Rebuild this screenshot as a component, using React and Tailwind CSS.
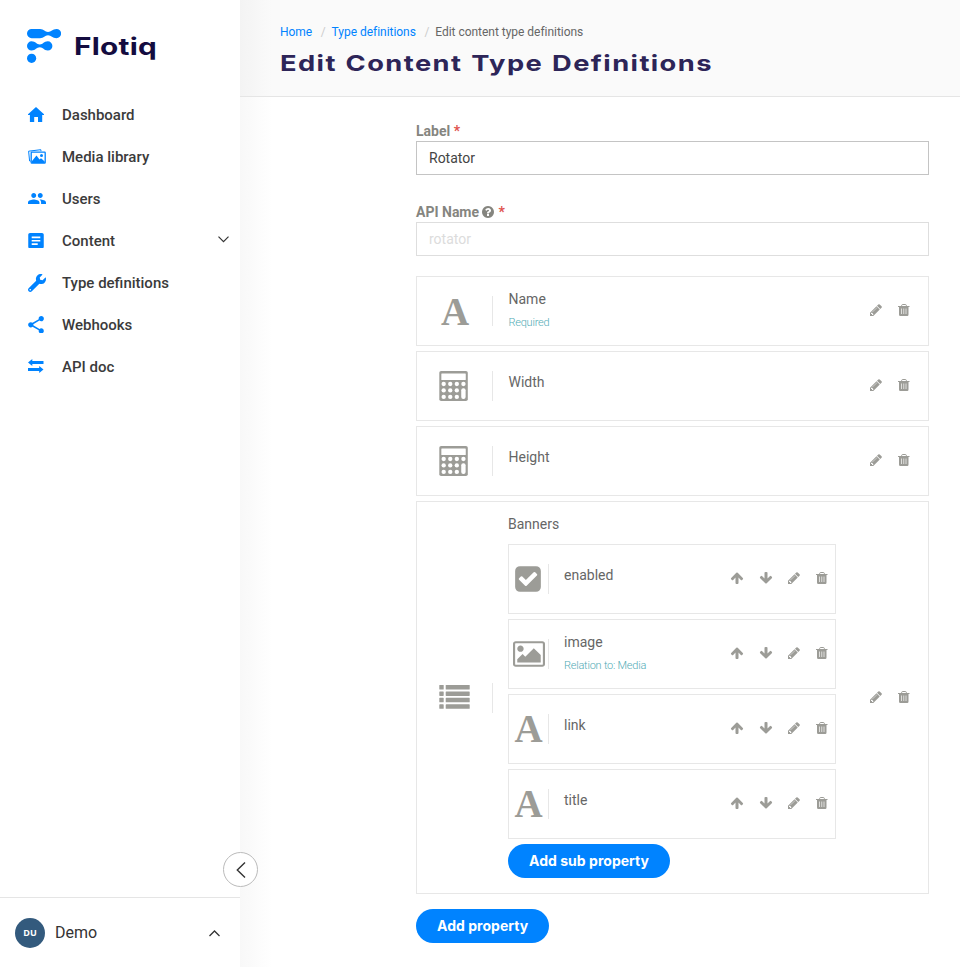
import { MdPeople, MdArticle, MdShare } from "react-icons/md";
import { FaWrench } from "react-icons/fa";

function Logo() {
  return (
    <div className="flex h-[34px] items-center">
      <svg width="34" height="34" viewBox="0 0 34 34" fill="#0083ff">
        <path d="M4.600 0H13C17 0 17.800 3 21 3S25.500 0 29.500 0a4.600 4.600 0 0 1 0 9.200C25.500 9.200 24.200 6.200 21 6.200S17 9.200 13 9.200H4.600A4.600 4.600 0 0 1 4.600 0Z" />
        <path d="M4.600 12.300c4 0 4.900 3.200 8.200 3.200s4-3.200 8-3.200a4.600 4.600 0 0 1 0 9.200c-4 0-4.700-3.200-8-3.200s-4.200 3.200-8.200 3.200a4.600 4.600 0 0 1 0-9.200Z" />
        <circle cx="4.600" cy="29.300" r="4.600" />
      </svg>
      <span className="mt-[1px] ml-[13px] inline-block origin-left scale-x-[1.24] font-[Inter] text-[24px] leading-none font-bold tracking-[0.2px] text-[#140c40]">Flotiq</span>
    </div>
  );
}

function HomeIcon() {
  return (
    <svg className="-mt-[1px]" width="16" height="15" viewBox="0 0 16 15" fill="currentColor">
      <path d="M8 0 16 7.300V8h-1.800v7H10v-5H6.200v5H1.900V8H0v-.700Z" />
    </svg>
  );
}

function MediaIcon() {
  return (
    <svg className="-mt-[1px]" width="18" height="15" viewBox="0 0 18 15" fill="none">
      <path d="M2.700 12.200 1.600 12 .6 2.200 12.800.7l.2 1.500" stroke="currentColor" strokeWidth="1" />
      <rect x="3.200" y="3.200" width="14" height="11" rx=".6" stroke="currentColor" strokeWidth="1.300" />
      <circle cx="13.500" cy="6.400" r="1.500" fill="currentColor" />
      <path d="M4 14v-2L8.500 6.500l3 4 1.500-1.300 3.700 3.300V14Z" fill="currentColor" />
    </svg>
  );
}

function ApiIcon() {
  return (
    <svg className="-mt-[2px]" width="16" height="14" viewBox="0 0 16 14" fill="currentColor">
      <path d="M0 3.500 4.300 0v2.100H15.500v2.800H4.300V7ZM15.500 10.500 11.200 7v2.100H0v2.800h11.200V14Z" />
    </svg>
  );
}

const NAV = [
  { label: "Dashboard", icon: <HomeIcon /> },
  { label: "Media library", icon: <MediaIcon /> },
  { label: "Users", icon: <MdPeople viewBox="1 5 22 14" className="-mt-[1px] h-[11.500px] w-[18px]" /> },
  { label: "Content", icon: <MdArticle viewBox="3 3 18 18" className="-mt-[1px] h-[15.500px] w-[16px]" />, expandable: true },
  { label: "Type definitions", icon: <FaWrench className="-mt-[1px] h-[18px] w-[18px]" /> },
  { label: "Webhooks", icon: <MdShare viewBox="3 2 18 20" className="-mt-[1px] h-[17.500px] w-[16px]" /> },
  { label: "API doc", icon: <ApiIcon /> },
];

function Sidebar() {
  return (
    <aside className="relative z-10 flex w-[240px] shrink-0 flex-col bg-white">
      <div className="pt-[29px] pl-[27px]">
        <Logo />
      </div>
      <nav className="mt-[31px] flex flex-col">
        {NAV.map((item) => (
          <a key={item.label} className="flex h-[42px] items-center pr-[11px] pl-[28px] text-[15px] font-medium text-[#3b3b3b]">
            <span className="flex w-[34px] text-[#0083ff]">{item.icon}</span>
            <span>{item.label}</span>
            {item.expandable && (
              <svg className="-mt-[4px] ml-auto" width="11" height="7" viewBox="0 0 11 7" fill="none" stroke="#333" strokeWidth="1.200">
                <path d="M.5.700 5.500 5.700l5-5" />
              </svg>
            )}
          </a>
        ))}
      </nav>
      <div className="mt-auto flex h-[70px] items-center border-t border-[#e5e5e5] pr-[20px] pl-[15px]">
        <span className="flex h-[30px] w-[30px] items-center justify-center rounded-full bg-[#335a7d] font-['Open_Sans'] text-[9px] font-bold text-white">DU</span>
        <span className="ml-[10px] text-[16px] text-[#333]">Demo</span>
        <svg className="mt-[2px] ml-auto" width="11" height="7" viewBox="0 0 11 7" fill="none" stroke="#333" strokeWidth="1.300">
          <path d="M.5 6 5.500 1l5 5" />
        </svg>
      </div>
      <button className="absolute top-[852px] left-[223px] flex h-[35px] w-[35px] items-center justify-center rounded-full border border-[#bbb] bg-white">
        <svg width="10" height="16" viewBox="0 0 10 16" fill="none" stroke="#333" strokeWidth="1.400">
          <path d="M9 .5 1.300 8 9 15.500" />
        </svg>
      </button>
    </aside>
  );
}

function PencilIcon() {
  return (
    <svg width="14" height="14" viewBox="0 0 1792 1792" fill="currentColor">
      <path d="M491 1536l91-91-235-235-91 91v107h128v128h107zm523-928q0-22-22-22-10 0-17 7l-542 542q-7 7-7 17 0 22 22 22 10 0 17-7l542-542q7-7 7-17zm-54-192l416 416-832 832h-416v-416zm683 96q0 53-37 90l-166 166-416-416 166-165q36-38 90-38 53 0 91 38l235 234q37 39 37 91z" />
    </svg>
  );
}

function TrashIcon() {
  return (
    <svg width="14" height="14" viewBox="0 0 14 14" fill="none">
      <path d="M4.700 3V2.200Q4.900 1.500 5.500 1.500h3q.6 0 .8.700V3" stroke="currentColor" />
      <path d="M1 3h11.500v1H11.500v7.500Q11.500 13 10.300 13H3.300Q2 13 2 11.500V4H1Z" fill="currentColor" />
      <path d="M4.500 5.500v5.500M6.750 5.500v5.500M9 5.500v5.500" stroke="#e6e6e4" strokeWidth=".9" />
    </svg>
  );
}

function ArrowIcon({ down }) {
  return (
    <svg className={down ? "rotate-180" : ""} width="14" height="14" viewBox="0 0 1792 1792" fill="currentColor">
      <path d="M1675 971q0 51-37 90l-75 75q-38 38-91 38-54 0-90-38l-294-293v704q0 52-37.500 84.500t-90.500 32.500h-128q-53 0-90.500-32.500t-37.500-84.500v-704l-294 293q-36 38-90 38t-90-38l-75-75q-38-38-38-90 0-53 38-91l651-651q35-37 90-37 54 0 91 37l651 651q37 39 37 91z" />
    </svg>
  );
}

function QuestionIcon() {
  return (
    <svg width="14" height="14" viewBox="0 0 1792 1792" fill="currentColor">
      <path d="M1024 1376v-192q0-14-9-23t-23-9h-192q-14 0-23 9t-9 23v192q0 14 9 23t23 9h192q14 0 23-9t9-23zm256-672q0-88-55.500-163t-138.500-116-170-41q-243 0-371 213-15 24 8 42l132 100q7 6 19 6 16 0 25-12 53-68 86-92 34-24 86-24 48 0 85.500 26t37.500 59q0 38-20 61t-68 45q-63 28-115.500 86.500t-52.500 125.500v36q0 14 9 23t23 9h192q14 0 23-9t9-23q0-19 21.500-49.500t54.500-49.500q32-18 49-28.500t46-35 44.500-48 28-60.500 12.500-81zm384 192q0 209-103 385.500t-279.500 279.500-385.500 103-385.500-103-279.500-279.500-103-385.500 103-385.500 279.500-279.500 385.500-103 385.500 103 279.500 279.500 103 385.500z" />
    </svg>
  );
}

function CalculatorIcon() {
  return (
    <svg width="29" height="30" viewBox="0 0 28.500 30" preserveAspectRatio="none">
      <rect x=".3" width="28" height="30" rx="1.800" fill="#9c9c97" />
      <g fill="#fff">
        <rect x="2.300" y="2.400" width="24" height="6.600" rx=".5" />
        {[13, 19.400, 25.900].map((y) => [4.600, 11.050, 17.500].map((x) => <circle key={`${x}-${y}`} cx={x} cy={y} r="2.150" />))}
        <circle cx="24" cy="13" r="2.150" />
        <rect x="21.850" y="17.300" width="4.300" height="10.700" rx="2" />
      </g>
    </svg>
  );
}

function ListIcon() {
  return (
    <svg className="-mt-[1px]" width="31" height="24" viewBox="0 0 31 24" fill="#9c9c97">
      {[0, 6.430, 12.860, 19.290].map((y) => (
        <g key={y}>
          <rect x=".3" y={y} width="4.400" height="4.500" rx=".6" />
          <rect x="6.700" y={y} width="24" height="4.500" rx=".6" />
        </g>
      ))}
    </svg>
  );
}

function CheckIcon() {
  return (
    <svg className="-mt-[1px] -ml-[1px]" width="30" height="30" viewBox="0 0 1792 1792" fill="#9c9c97">
      <path d="M813 1299l614-614q19-19 19-45t-19-45l-102-102q-19-19-45-19t-45 19l-467 467-211-211q-19-19-45-19t-45 19l-102 102q-19 19-19 45t19 45l358 358q19 19 45 19t45-19zm851-883v960q0 119-84.500 203.500t-203.500 84.500h-960q-119 0-203.500-84.500t-84.500-203.500v-960q0-119 84.500-203.500t203.500-84.500h960q119 0 203.500 84.500t84.500 203.500z" />
    </svg>
  );
}

function PictureIcon() {
  return (
    <svg width="32" height="30" viewBox="-64 0 1920 1792" fill="#9c9c97">
      <path d="M576 576q0 80-56 136t-136 56-136-56-56-136 56-136 136-56 136 56 56 136zm1024 384v448h-1408v-192l320-320 160 160 512-512zm96-704h-1600q-13 0-22.500 9.500t-9.500 22.500v1216q0 13 9.500 22.500t22.500 9.500h1600q13 0 22.500-9.500t9.500-22.500v-1216q0-13-9.500-22.500t-22.500-9.500zm160 32v1216q0 66-47 113t-113 47h-1600q-66 0-113-47t-47-113v-1216q0-66 47-113t113-47h1600q66 0 113 47t47 113z" />
    </svg>
  );
}

function LetterIcon() {
  return <span className="font-['Liberation_Serif',serif] text-[39px] leading-[30px] font-bold text-[#9c9c97]">A</span>;
}

function Field({ label, help, value, disabled }) {
  return (
    <div className="flex flex-col">
      <label className="flex h-[20px] items-center text-[14px] font-bold text-[#85857f]">
        {label}
        {help && <span className="ml-[2px]"><QuestionIcon /></span>}
        <span className="ml-[3.500px] text-[#e0524d]">*</span>
      </label>
      <div className={`flex h-[34px] items-center border px-3 text-[14px] ${disabled ? "border-[#dedede] text-[#dcdcdc]" : "border-[#c4c4c4] text-[#444]"}`}>{value}</div>
    </div>
  );
}

function Texts({ name, note }) {
  return (
    <div className="flex flex-col">
      <span className="text-[14px] leading-[20px] text-[#666]">{name}</span>
      {note && <span className="mt-[6px] text-[11px] leading-[16px] font-light tracking-[-0.230px] text-[#4fabb5]">{note}</span>}
    </div>
  );
}

function PropertyRow({ icon, name, note }) {
  return (
    <div className="flex h-[70px] border border-[#e7e7e7] bg-white">
      <div className="mt-[19px] flex h-[30px] w-[76px] items-center border-r border-[#e7e7e7] pl-[22px]">{icon}</div>
      <div className={note ? "ml-[15.500px] pt-[12px]" : "ml-[15.500px] pt-[20px]"}>
        <Texts name={name} note={note} />
      </div>
      <div className="mr-[17px] ml-auto flex items-center gap-[14px] pb-[2px] text-[#9c9c97]">
        <PencilIcon />
        <TrashIcon />
      </div>
    </div>
  );
}

function SubRow({ icon, name, note }) {
  return (
    <div className="flex h-[70px] border border-[#e7e7e7]">
      <div className="mt-[19px] flex h-[30px] w-[40px] items-center justify-center border-r border-[#e7e7e7]">{icon}</div>
      <div className={note ? "ml-[15px] pt-[12px]" : "ml-[15px] pt-[20px]"}>
        <Texts name={name} note={note} />
      </div>
      <div className="mr-[6px] ml-auto flex items-center gap-[14px] pb-[2px] text-[#9c9c97]">
        <div className="flex gap-[15px]">
          <ArrowIcon />
          <ArrowIcon down />
        </div>
        <PencilIcon />
        <TrashIcon />
      </div>
    </div>
  );
}

function Button({ children }) {
  return <button className="h-[34px] self-start rounded-full bg-[#0083ff] px-[21px] pb-[2px] font-[Inter] text-[14px] font-bold tracking-[0.030px] text-white">{children}</button>;
}

export default function App() {
  return (
    <div className="flex h-[967px] w-[960px] overflow-hidden bg-white font-[Roboto,sans-serif]">
      <Sidebar />
      <main className="flex flex-1 flex-col bg-[linear-gradient(to_right,#f8f8f8_0px,#ffffff_32px)]">
        <header className="flex h-[97px] flex-col border-b border-[#e5e5e5] bg-[linear-gradient(to_right,#f3f3f3_0px,#fafafa_32px)] pt-[23px] pl-[40px]">
          <div className="flex h-[18px] items-center text-[12px] tracking-[-0.030px] text-[#666]">
            <span className="text-[#0083ff]">Home</span>
            <span className="mr-[6px] ml-[8.500px] text-[#ccc]">/</span>
            <span className="text-[#0083ff]">Type definitions</span>
            <span className="mr-[6px] ml-[8.500px] text-[#ccc]">/</span>
            <span>Edit content type definitions</span>
          </div>
          <h1 className="mt-[8px] origin-left scale-x-[1.240] self-start font-[Inter] text-[22px] leading-[28px] font-bold tracking-[1.150px] [word-spacing:0.700px] whitespace-nowrap text-[#2d2558]">Edit Content Type Definitions</h1>
        </header>
        <section className="ml-[176px] flex w-[513px] flex-col pt-[24px]">
          <Field label="Label" value="Rotator" />
          <div className="mt-[27px]">
            <Field label="API Name" help value="rotator" disabled />
          </div>
          <div className="mt-[20px] flex flex-col gap-[5px]">
            <PropertyRow icon={<span className="flex pt-[1px] pl-[2px]"><LetterIcon /></span>} name="Name" note="Required" />
            <PropertyRow icon={<CalculatorIcon />} name="Width" />
            <PropertyRow icon={<CalculatorIcon />} name="Height" />
            <div className="flex h-[393px] items-center border border-[#e7e7e7] bg-white">
              <div className="flex h-[30px] w-[76px] items-center border-r border-[#e7e7e7] pl-[22px]"><ListIcon /></div>
              <div className="ml-[15px] flex w-[328px] flex-col gap-[5px] self-start pt-[12px]">
                <span className="mb-[5px] text-[14px] leading-[20px] text-[#666]">Banners</span>
                <SubRow icon={<CheckIcon />} name="enabled" />
                <SubRow icon={<PictureIcon />} name="image" note="Relation to: Media" />
                <SubRow icon={<LetterIcon />} name="link" />
                <SubRow icon={<LetterIcon />} name="title" />
                <Button>Add sub property</Button>
              </div>
              <div className="mr-[17px] ml-auto flex items-center gap-[14px] pb-[2px] text-[#9c9c97]">
                <PencilIcon />
                <TrashIcon />
              </div>
            </div>
          </div>
          <div className="mt-[15px] flex">
            <Button>Add property</Button>
          </div>
        </section>
      </main>
    </div>
  );
}
